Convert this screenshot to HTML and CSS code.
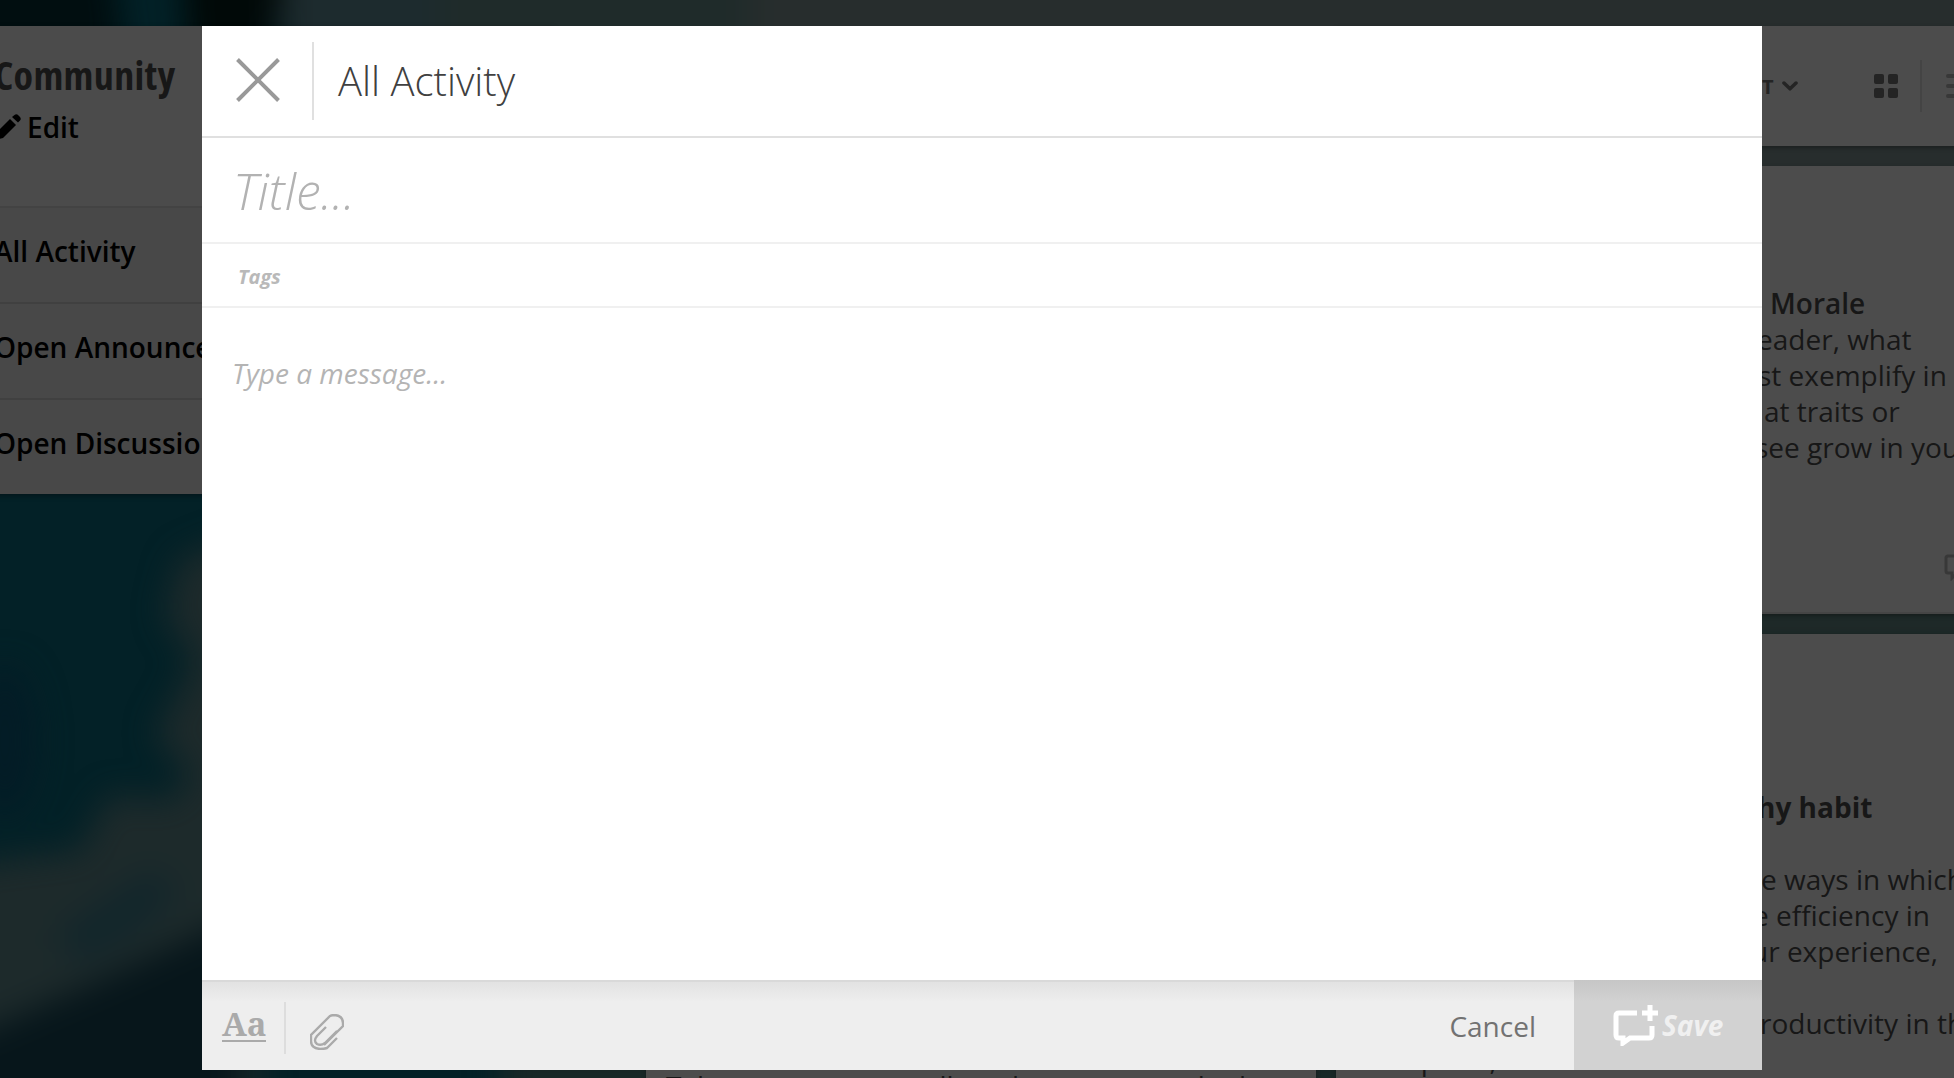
FILE: index.html
```html
<!DOCTYPE html>
<html lang="en">
<head>
<meta charset="utf-8">
<title>Community</title>
<link rel="stylesheet" href="styles.css">
</head>
<body>
<div class="page">
  <svg class="backdrop" viewBox="0 0 1954 1078" preserveAspectRatio="none" aria-hidden="true">
    <defs>
      <filter id="soft" x="-20%" y="-20%" width="140%" height="140%" color-interpolation-filters="sRGB"><feGaussianBlur stdDeviation="16"/></filter>
    </defs>
    <rect width="1954" height="1078" fill="#032127"/>
    <g filter="url(#soft)">
      <rect x="280" y="-60" width="1800" height="150" fill="#1d2b2e"/>
      <rect x="440" y="-60" width="1800" height="150" fill="#1f2b2a"/>
      <rect x="750" y="-60" width="1500" height="300" fill="#272d2d"/>
      <path d="M-60-60H110L125 60H-60Z" fill="#010e10"/>
      <path d="M180-60H290L265 80H190Z" fill="#010908"/>
      <ellipse cx="5" cy="740" rx="32" ry="75" fill="#031c26"/>
      <path d="M230 540L180 560L165 615L195 660L180 690L155 735L190 775L170 800L110 795L95 820L80 850L0 860L-60 870V1140H260V540Z" fill="#1d2a2b"/>
      <path d="M60 930L150 870L180 890L140 930L90 960L60 950Z" fill="#12262b"/>
      <path d="M-60 1050L100 980L240 915V1160H-60Z" fill="#07161b"/>
      <rect x="1700" y="580" width="300" height="80" fill="#1e2928"/>
      <rect x="500" y="1040" width="900" height="80" fill="#182727"/>
    </g>
  </svg>

  <aside class="sidebar">
    <div class="sidebar-head">
      <h2 class="community">Community</h2>
      <div class="edit">
        <svg class="pencil" viewBox="0 0 26 26"><path d="M2 18L15 5L21 11L8 24L0 26Z"/><path d="M17 3L19.500 1Q21.500-.5 23.500 1.500L25 3Q26.500 5 25 6.500L23 8.500Z"/></svg>
        <span>Edit</span>
      </div>
    </div>
    <div class="nav-item">All Activity</div>
    <div class="nav-item">Open Announcements</div>
    <div class="nav-item">Open Discussions</div>
  </aside>

  <div class="toolbar">
    <span class="sort">T</span>
    <svg class="chevron" width="16" height="10" viewBox="0 0 16 10"><path d="M2 2L8 7.800L14 2"/></svg>
    <svg class="grid-icon" width="24" height="24" viewBox="0 0 24 24"><rect width="10" height="10" rx="2"/><rect x="14" width="10" height="10" rx="2"/><rect y="14" width="10" height="10" rx="2"/><rect x="14" y="14" width="10" height="10" rx="2"/></svg>
    <i class="tool-rule"></i>
    <svg class="list-icon" width="28" height="24" viewBox="0 0 28 24"><path d="M2 2H28M2 12H28M2 22H28"/></svg>
  </div>

  <div class="cards">
    <div class="column column-mid">
      <div class="card card-peek"><p class="line">Take a moment to call on the manager who has</p></div>
    </div>
    <div class="column">
      <article class="card card-one">
        <p class="line strong m1">Morale</p>
        <p class="line m2">leader, what</p>
        <p class="line m3">st exemplify in</p>
        <p class="line m4">at traits or</p>
        <p class="line m5">see grow in your</p>
        <svg class="comment" width="30" height="27" viewBox="0 0 30 27"><path d="M4 2H28V19H13L8 24V19H4Q2 19 2 17V4Q2 2 4 2Z"/></svg>
      </article>
      <article class="card card-two">
        <p class="line bold h1">hy habit</p>
        <p class="line h2">e ways in which</p>
        <p class="line h3">e efficiency in</p>
        <p class="line h4">ur experience,</p>
        <p class="line h5">roductivity in the</p>
        <p class="line h6">workplace, and</p>
      </article>
    </div>
  </div>

  <section class="modal">
    <header class="modal-head">
      <div class="close"><svg width="44" height="44" viewBox="0 0 44 44"><path d="M1.500 1.500L42.500 42.500M42.500 1.500L1.500 42.500"/></svg></div>
      <h1 class="modal-title">All Activity</h1>
    </header>
    <div class="title-field">Title...</div>
    <div class="tags-field">Tags</div>
    <div class="message-field">Type a message...</div>
    <footer class="modal-foot">
      <span class="format">Aa</span>
      <i class="foot-rule"></i>
      <svg class="clip" width="34" height="36" viewBox="0 0 34 36"><path d="M16 13L7 22Q3 27 7 30Q11 32 15 29L27 17M27 24L17 34Q14 35 10 35Q1 34 1 27V21L20 2Q22 1 25 1Q33 2 33 9V12L14 31"/></svg>
      <span class="cancel">Cancel</span>
      <div class="save">
        <svg width="46" height="42" viewBox="0 0 46 42"><path d="M24 9H6Q3 9 3 12V31Q3 34 6 34H10V39L17 34H36Q39 34 39 31V22"/><path d="M37 1V17M29 9H45"/></svg>
        <span>Save</span>
      </div>
    </footer>
  </section>
</div>
</body>
</html>
```
FILE: styles.css
```css
* { box-sizing: border-box; }
body { margin: 0; font-family: "Open Sans", "Noto Sans", sans-serif; font-size: 28px; }
h1, h2, p { margin: 0; font-weight: 400; }
svg { display: block; flex: none; }
.page { position: relative; width: 1954px; height: 1078px; overflow: hidden; background: #032127; }
.backdrop { position: absolute; inset: 0; width: 100%; height: 100%; }

.sidebar { position: absolute; left: -6px; top: 26px; width: 560px; height: 468px; background: #4b4b4b; box-shadow: 0 2px 5px rgba(0,0,0,.35); }
.sidebar-head { height: 182px; border-bottom: 2px solid #434343; padding-top: 21px; }
.community { font-size: 40px; line-height: 56px; font-weight: 700; font-stretch: 75%; letter-spacing: .3px; color: #171717; white-space: nowrap; }
.edit { display: flex; align-items: center; height: 48px; gap: 5px; font-weight: 600; color: #000; }
.pencil { width: 28px; height: 26px; fill: #000; }
.nav-item { height: 96px; line-height: 87px; border-bottom: 2px solid #404040; background: #484848; font-weight: 600; color: #000; }
.nav-item:last-child { height: 94px; border: 0; }

.toolbar { position: absolute; left: 1336px; top: 26px; width: 670px; height: 120px; padding-left: 426px; display: flex; align-items: center; background: #4c4c4c; color: #242424; box-shadow: 0 2px 4px rgba(0,0,0,.3); }
.sort { font-size: 20px; font-weight: 700; width: 20px; padding-top: 1px; }
.chevron { fill: none; stroke: #242424; stroke-width: 3.500; stroke-linecap: round; stroke-linejoin: round; }
.grid-icon { margin-left: 76px; fill: #242424; }
.tool-rule { width: 2px; height: 52px; margin-left: 22px; background: #444; }
.list-icon { margin-left: 24px; fill: none; stroke: #383838; stroke-width: 4; stroke-linecap: round; }

.cards { position: absolute; left: 646px; top: 166px; display: grid; grid-template-columns: 670px 670px; gap: 20px; color: #171717; }
.card { background: #4c4c4c; overflow: hidden; box-shadow: 0 2px 4px rgba(0,0,0,.3); }
.card-peek { margin-top: 468px; height: 500px; padding: 434px 20px 0; }
.card-one { height: 448px; padding-top: 119px; margin-bottom: 20px; border-bottom: 2px solid #454545; }
.card-two { height: 500px; padding-top: 155px; }
.line { line-height: 36px; height: 36px; white-space: nowrap; }
.strong { font-weight: 600; }
.bold { font-weight: 700; }
.m1 { padding-left: 434px; } .m2 { padding-left: 414px; } .m3 { padding-left: 422px; }
.m4 { padding-left: 428px; } .m5 { padding-left: 419px; }
.h1 { padding-left: 421px; height: 72px; } .h2 { padding-left: 425px; } .h3 { padding-left: 417px; }
.h4 { padding-left: 415px; height: 72px; } .h5 { padding-left: 424px; } .h6 { padding-left: 20px; }
.comment { margin: 89px 0 0 608px; fill: none; stroke: #383838; stroke-width: 3; }

.modal { position: absolute; left: 202px; top: 26px; width: 1560px; height: 1044px; display: flex; flex-direction: column; background: #fff; color: #b9b9b9; }
.modal-head { height: 112px; display: flex; align-items: center; border-bottom: 2px solid #e0e0e0; }
.close { width: 112px; height: 78px; border-right: 2px solid #e0e0e0; padding: 16px 0 0 34px; }
.close svg { fill: none; stroke: #999; stroke-width: 4; }
.modal-title { font-size: 40px; font-weight: 300; color: #404040; padding: 0 0 2px 24px; }
.title-field { height: 106px; padding-left: 31px; line-height: 107px; border-bottom: 2px solid #f0f0f0; font-size: 50px; font-weight: 300; font-style: italic; color: #b2b2b2; }
.tags-field { height: 64px; padding-left: 36px; line-height: 66px; border-bottom: 2px solid #f0f0f0; font-size: 20px; font-weight: 700; font-style: italic; }
.message-field { flex: 1; padding: 45px 30px; line-height: 40px; font-style: italic; color: #b4b4b4; }
.modal-foot { height: 90px; display: flex; align-items: center; border-top: 2px solid #d9d9d9; background: linear-gradient(#e2e2e2, #eee 20px); }
.format { width: 44px; height: 38px; margin: -6px 18px 0 20px; padding-top: 3px; border-bottom: 2px solid #aaa; color: #aaa; font: 700 33px/34px "Noto Serif", "Liberation Serif", serif; }
.foot-rule { width: 2px; height: 52px; margin-top: 4px; background: #ddd; }
.clip { margin: 12px 0 0 24px; fill: none; stroke: #aaa; stroke-width: 2.400; }
.cancel { margin-left: auto; margin-right: 38px; padding-bottom: 1px; color: #727272; }
.save { width: 188px; height: 90px; margin-top: -2px; display: flex; align-items: center; padding-left: 39px; gap: 3px; background: linear-gradient(#c6c6c6, #d2d2d2 22px); font-weight: 700; font-style: italic; color: #f0f0f0; }
.save svg { fill: none; stroke: #fff; stroke-width: 5; }
```
